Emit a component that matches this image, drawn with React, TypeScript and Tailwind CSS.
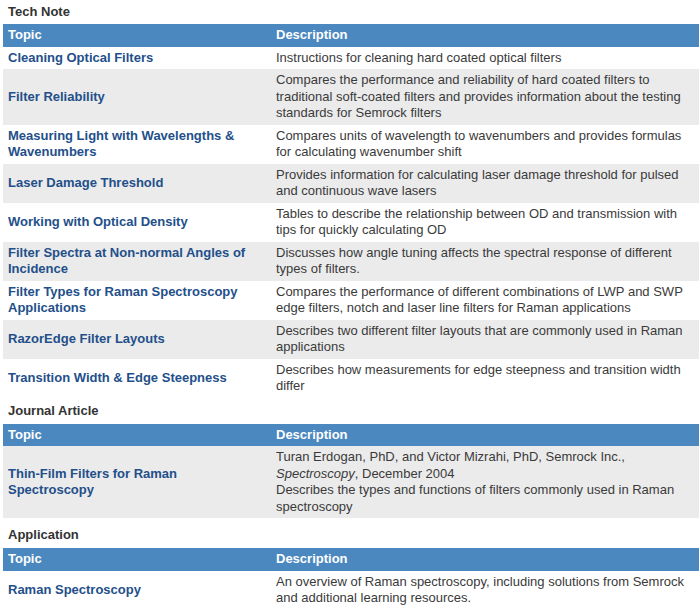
import React from "react";

type Row = { topic: string; desc: React.ReactNode };

const techNotes: Row[] = [
  { topic: "Cleaning Optical Filters", desc: "Instructions for cleaning hard coated optical filters" },
  {
    topic: "Filter Reliability",
    desc: "Compares the performance and reliability of hard coated filters to traditional soft-coated filters and provides information about the testing standards for Semrock filters",
  },
  {
    topic: "Measuring Light with Wavelengths & Wavenumbers",
    desc: "Compares units of wavelength to wavenumbers and provides formulas for calculating wavenumber shift",
  },
  {
    topic: "Laser Damage Threshold",
    desc: "Provides information for calculating laser damage threshold for pulsed and continuous wave lasers",
  },
  {
    topic: "Working with Optical Density",
    desc: "Tables to describe the relationship between OD and transmission with tips for quickly calculating OD",
  },
  {
    topic: "Filter Spectra at Non-normal Angles of Incidence",
    desc: "Discusses how angle tuning affects the spectral response of different types of filters.",
  },
  {
    topic: "Filter Types for Raman Spectroscopy Applications",
    desc: "Compares the performance of different combinations of LWP and SWP edge filters, notch and laser line filters for Raman applications",
  },
  {
    topic: "RazorEdge Filter Layouts",
    desc: "Describes two different filter layouts that are commonly used in Raman applications",
  },
  {
    topic: "Transition Width & Edge Steepness",
    desc: "Describes how measurements for edge steepness and transition width differ",
  },
];

const articles: Row[] = [
  {
    topic: "Thin-Film Filters for Raman Spectroscopy",
    desc: (
      <>
        Turan Erdogan, PhD, and Victor Mizrahi, PhD, Semrock Inc.,
        <br />
        <i>Spectroscopy</i>, December 2004
        <br />
        Describes the types and functions of filters commonly used in Raman spectroscopy
      </>
    ),
  },
];

const applications: Row[] = [
  {
    topic: "Raman Spectroscopy",
    desc: "An overview of Raman spectroscopy, including solutions from Semrock and additional learning resources.",
  },
];

// striped rows; the journal table has its only row shaded
function Section({ title, rows, first, shadeFirst }: { title: string; rows: Row[]; first?: boolean; shadeFirst?: boolean }) {
  return (
    <section>
      <h2 className={`px-2 text-[13px] leading-[17px] font-bold text-[#333] ${first ? "pt-[3px] pb-[4px]" : "pt-[4px] pb-[5px]"}`}>
        {title}
      </h2>
      <table className="ml-[3px] w-[696px] table-fixed border-collapse text-[13px] leading-[16.5px]">
        <colgroup>
          <col className="w-[269px]" />
          <col />
        </colgroup>
        <thead>
          <tr className="bg-[#4a88bf] text-left text-white">
            <th className="pl-[5px] py-[3px] font-bold">Topic</th>
            <th className="pl-[4px] py-[3px] font-bold">Description</th>
          </tr>
        </thead>
        <tbody>
          {rows.map((r, i) => (
            <tr key={r.topic} className={i % 2 === 1 || shadeFirst ? "bg-[#ebebeb]" : "bg-white"}>
              <td className="pl-[5px] pr-2 py-[3px] align-middle font-bold text-[#234f8a]">{r.topic}</td>
              <td className="pl-[4px] pr-2 py-[3px] align-top text-[#3a3a3a]">{r.desc}</td>
            </tr>
          ))}
        </tbody>
      </table>
    </section>
  );
}

export default function App() {
  return (
    <main className="w-[700px] h-[605px] overflow-hidden bg-white font-['Liberation_Sans',Arial,sans-serif]">
      <Section title="Tech Note" rows={techNotes} first />
      <Section title="Journal Article" rows={articles} shadeFirst />
      <div className="h-[4px]" />
      <Section title="Application" rows={applications} />
    </main>
  );
}
